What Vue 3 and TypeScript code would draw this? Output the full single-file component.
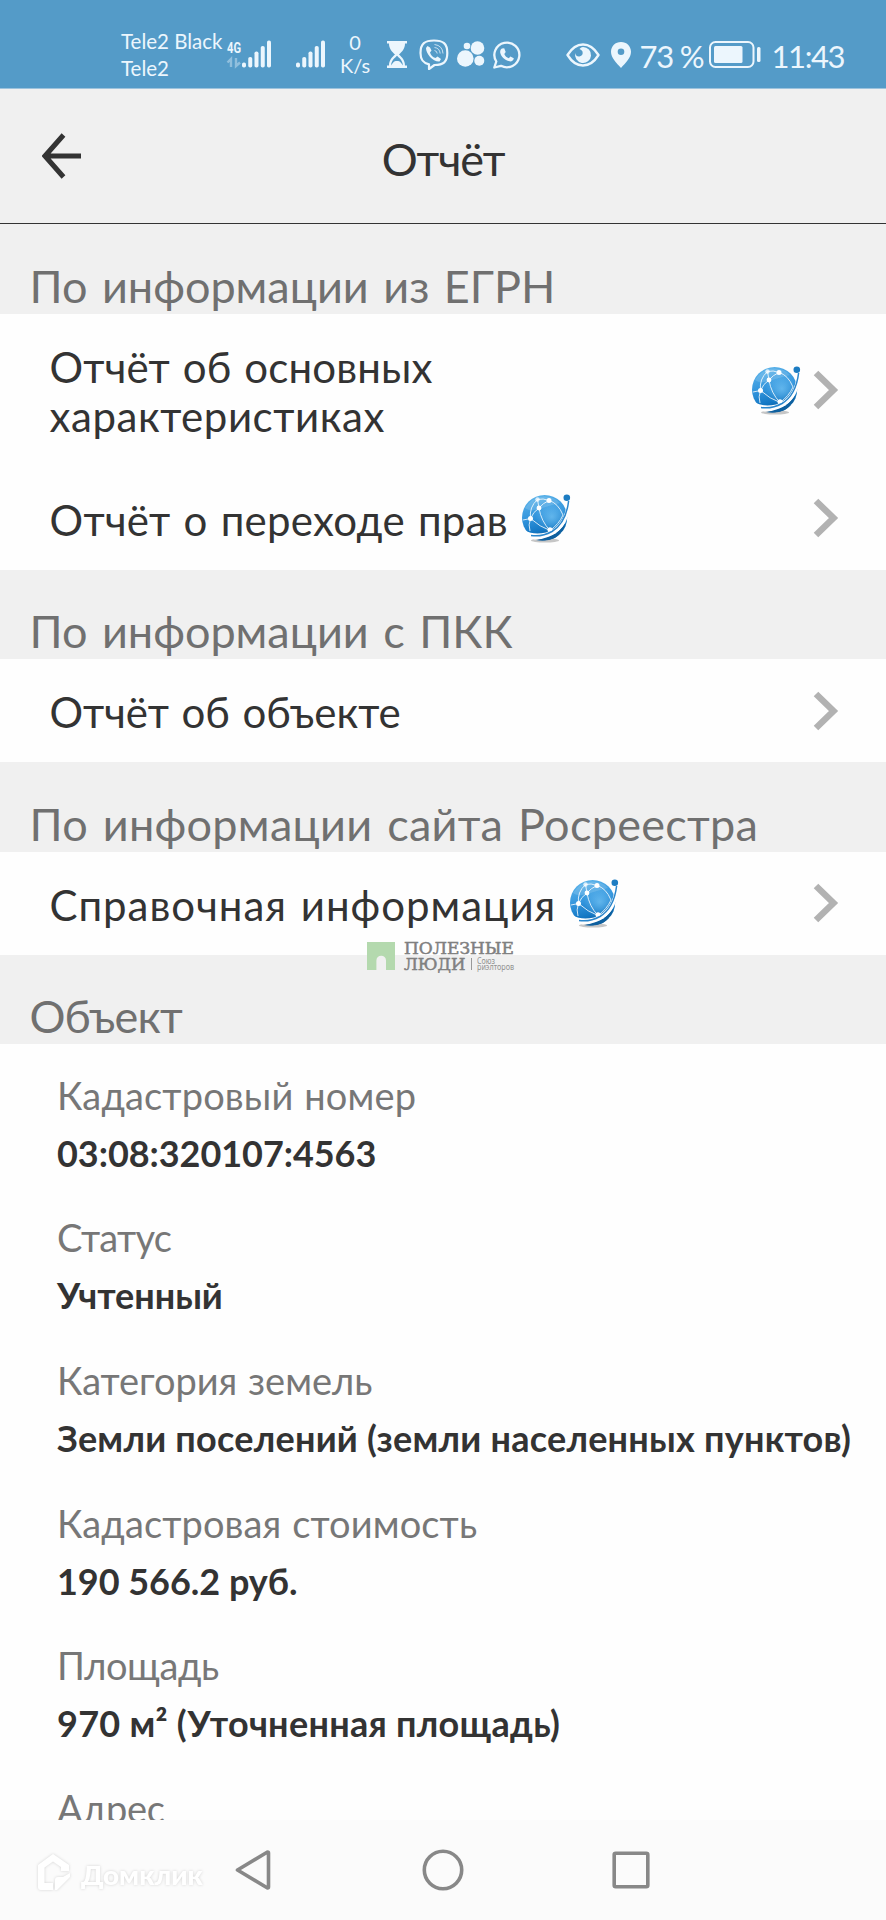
<script setup lang="ts">
interface Line {
  text: string
  tracking: number
}
interface ReportLink {
  lines: Line[]
  globe?: 'inline' | 'end'
}
interface Section {
  title: string
  tracking: number
  links: ReportLink[]
}
interface Detail {
  label: string
  labelTracking: number
  value: string
  valueTracking: number
}

const sections: Section[] = [
  {
    title: 'По информации из ЕГРН',
    tracking: 0,
    links: [
      {
        lines: [
          { text: 'Отчёт об основных', tracking: 0.15 },
          { text: 'характеристиках', tracking: 0.55 },
        ],
        globe: 'end',
      },
      { lines: [{ text: 'Отчёт о переходе прав', tracking: 0.28 }], globe: 'inline' },
    ],
  },
  {
    title: 'По информации с ПКК',
    tracking: 0,
    links: [{ lines: [{ text: 'Отчёт об объекте', tracking: -0.05 }] }],
  },
  {
    title: 'По информации сайта Росреестра',
    tracking: 0.28,
    links: [{ lines: [{ text: 'Справочная информация', tracking: 1 }], globe: 'inline' }],
  },
  { title: 'Объект', tracking: -0.8, links: [] },
]

const details: Detail[] = [
  { label: 'Кадастровый номер', labelTracking: 0.15, value: '03:08:320107:4563', valueTracking: -0.05 },
  { label: 'Статус', labelTracking: -0.7, value: 'Учтенный', valueTracking: -0.05 },
  { label: 'Категория земель', labelTracking: 0, value: 'Земли поселений (земли населенных пунктов)', valueTracking: 0.23 },
  { label: 'Кадастровая стоимость', labelTracking: 0.12, value: '190 566.2 руб.', valueTracking: -0.03 },
  { label: 'Площадь', labelTracking: -0.43, value: '970 м² (Уточненная площадь)', valueTracking: 0.27 },
  { label: 'Адрес', labelTracking: -0.3, value: '', valueTracking: 0 },
]

const bars = [5, 10.5, 16, 21.5, 27]
const track = (px: number) => ({ letterSpacing: `${px}px` })
</script>

<template>
  <div class="screen">
    <svg class="defs" width="0" height="0" aria-hidden="true">
      <defs>
        <linearGradient id="globeFill" x1="0.3" y1="0" x2="0.6" y2="1">
          <stop offset="0" stop-color="#5cb4ea" />
          <stop offset="0.45" stop-color="#3294dc" />
          <stop offset="0.75" stop-color="#1478c4" />
          <stop offset="1" stop-color="#0a5490" />
        </linearGradient>
        <radialGradient id="globeGlow" cx="0.66" cy="0.48" r="0.36">
          <stop offset="0" stop-color="#6fc0f2" stop-opacity="0.8" />
          <stop offset="1" stop-color="#6fc0f2" stop-opacity="0" />
        </radialGradient>
        <symbol id="globe" viewBox="0 0 49 49">
          <ellipse cx="23" cy="46.5" rx="14" ry="2" fill="#000" opacity="0.22" />
          <circle cx="22.6" cy="23.6" r="22.6" fill="url(#globeFill)" />
          <circle cx="22.6" cy="23.6" r="22.6" fill="url(#globeGlow)" />
          <path d="M3 14Q10 3 22 2.500Q33 2.500 38 9Q26 12 17 15Q8 18 3 14Z" fill="#fff" opacity="0.14" />
          <g fill="none" stroke="#fff" stroke-width="1" opacity="0.8">
            <path d="M8.500 24.500Q11 18 17 14Q21 9 27 6.500Q21 4 15.500 5.500L17 14" />
            <path d="M17 14Q19 27 28 36.500M27 6.500Q36 9 41 21Q37 30 28 36.500" />
            <path d="M8.500 24.500Q18 33 28 36.500Q35 42 40 38" />
            <path d="M8.500 24.500Q7 13 15.500 5.500M8.500 24.500Q6 31 8 37M1 26L8.500 24.500" />
          </g>
          <g fill="#fff">
            <circle cx="8.500" cy="24.500" r="2.500" />
            <circle cx="17" cy="14" r="2.400" />
            <circle cx="27" cy="6.500" r="2.500" />
            <circle cx="15.500" cy="5.500" r="2.200" opacity="0.75" />
            <circle cx="28" cy="35.800" r="2.500" />
          </g>
          <path d="M3 36.500Q11 41 24 38.500Q42 33 45.500 7L47.800 8Q47.500 36 26 43Q18 46 12 45.500Q6 42 3 36.500Z" fill="#fff" />
          <path d="M9 41.500Q20 43 30 37.500Q44 29 46.600 7" fill="none" stroke="#2a86cc" stroke-width="1.500" />
          <path d="M14 46Q22 45.500 28 43Q38 38 43.500 29Q41 39 33 44Q24 48 14 46Z" fill="#0e609f" />
          <circle cx="44.800" cy="3.800" r="3.300" fill="#1c7cc2" />
        </symbol>
      </defs>
    </svg>

    <header class="status">
      <div class="operators"><span>Tele2 Black</span><span>Tele2</span></div>
      <svg class="net" width="17" height="30" viewBox="0 0 17 30">
        <text x="1" y="13.500" textLength="14" lengthAdjust="spacingAndGlyphs" class="net-label">4G</text>
        <g opacity="0.4" stroke="#ecf6fd" stroke-width="2.400" fill="none">
          <path d="M5 28V20L1.500 23.500M10 19V27L14 23.500" />
        </g>
      </svg>
      <svg class="signal" width="29" height="28" viewBox="0 0 29 28">
        <rect v-for="(h, i) in bars" :key="i" :x="i * 6.250" :y="27.500 - h" width="4" :height="h" rx="1.800" />
      </svg>
      <svg class="signal second" width="29" height="28" viewBox="0 0 29 28">
        <rect v-for="(h, i) in bars" :key="i" :x="i * 6.250" :y="27.500 - h" width="4" :height="h" rx="1.800" />
      </svg>
      <div class="speed"><span>0</span><span>K/s</span></div>
      <svg class="hourglass" width="20" height="27" viewBox="0 0 20 27">
        <path d="M0 0H20V2.500H18C18 8 15 10.500 12 13.500C15 16.500 18 19 18 24.500H20V27H0V24.500H2C2 19 5 16.500 8 13.500C5 10.500 2 8 2 2.500H0Z" />
        <path d="M4 24.500C4.500 19 8 17 10 14.800C12 17 15.500 19 16 24.500C13 20 12 20 10 20C8 20 7 20 4 24.500Z" fill="#549bc8" />
      </svg>
      <svg class="viber" width="30" height="31" viewBox="0 0 30 31" fill="none" stroke="#ecf6fd">
        <path d="M15 1.500C24 1.500 28.300 4.500 28.300 14C28.300 23 24.500 26 15.500 26L10 30V25.300C4 24 1.500 21 1.500 14C1.500 4.500 6 1.500 15 1.500Z" stroke-width="2.200" stroke-linejoin="round" />
        <path d="M8.500 7L11 8.500L12.500 11.500L11 13.500C12 16.500 13.500 18 16.500 19L18.500 17.500L22 20L20.500 22.500C14 23 7 15 7 9Z" fill="#ecf6fd" stroke="none" />
        <path d="M15.500 11.500Q18 12 18.200 14.500M15.500 8.500Q20.500 9 21.200 14.500M15.500 5.500Q23.500 6.500 24 14.500" stroke-width="1" opacity="0.75" />
      </svg>
      <svg class="dots" width="28" height="27" viewBox="0 0 28 27">
        <circle cx="8.300" cy="17.500" r="8.300" /><circle cx="20.500" cy="7" r="6.800" />
        <circle cx="10" cy="5" r="3.300" /><circle cx="22.300" cy="19.800" r="5" />
      </svg>
      <svg class="whatsapp" width="28" height="28" viewBox="0 0 28 28">
        <path d="M1.300 26.500L3.300 20.500A12.500 12.300 0 1 1 8 24.800Z" fill="none" stroke="#ecf6fd" stroke-width="2.300" stroke-linejoin="round" />
        <path d="M9 7.500L11.200 7.300L12.700 11L11.300 12.900C12.200 15 13.700 16.400 15.800 17.200L17.400 15.400L20.800 17.200C20.700 19.600 18.500 20.700 16.500 20.300C11.500 19 8 15.500 7.200 11.500C7 9.500 7.800 8.200 9 7.500Z" />
      </svg>
      <svg class="eye" width="34" height="24" viewBox="0 0 34 24">
        <path d="M1.500 12Q8 1.500 17 1.500T32.500 12Q26 22.500 17 22.500T1.500 12Z" fill="none" stroke="#ecf6fd" stroke-width="2.400" stroke-linejoin="round" />
        <path d="M17 4A8 8 0 1 1 9.300 10Q10 14 13.500 13.500Q17.500 12.500 16.500 8.500Q15.500 6.500 13.500 6Q15 4 17 4Z" />
      </svg>
      <svg class="pin" width="20" height="26" viewBox="0 0 20 26">
        <path fill-rule="evenodd" d="M10 0C4.300 0 0 4.200 0 9.800C0 16 5.500 21 10 26C14.500 21 20 16 20 9.800C20 4.200 15.700 0 10 0ZM10 6.500A3.300 3.300 0 1 1 10 13.100A3.300 3.300 0 0 1 10 6.500Z" />
      </svg>
      <span class="percent">73 %</span>
      <svg class="battery" width="52" height="27" viewBox="0 0 52 27">
        <rect x="1" y="1" width="43.500" height="25" rx="5.500" fill="none" stroke="#ecf6fd" stroke-width="2" />
        <rect x="5" y="5" width="28.500" height="17" rx="1.500" />
        <rect x="48" y="6" width="3.500" height="15" rx="1.500" />
      </svg>
      <span class="clock">11:43</span>
    </header>

    <div class="toolbar">
      <svg class="back" width="40" height="46" viewBox="0 0 40 46">
        <path d="M21.500 2L3 23L21.500 44M3.500 23H39" fill="none" stroke="#333" stroke-width="5" />
      </svg>
      <h1>Отчёт</h1>
    </div>

    <main class="content">
      <section v-for="s in sections" :key="s.title">
        <h2 :style="track(s.tracking)">{{ s.title }}</h2>
        <div v-for="l in s.links" :key="l.lines[0].text" class="link" :class="{ tall: l.lines.length > 1 }">
          <span class="link-text">
            <span v-for="t in l.lines" :key="t.text" class="line" :style="track(t.tracking)">{{ t.text }}</span>
          </span>
          <svg v-if="l.globe" class="globe" :class="l.globe"><use href="#globe" /></svg>
          <svg class="chevron" width="26" height="40" viewBox="0 0 26 40">
            <path d="M3 3L20.500 20L3 37" fill="none" stroke="#b2b2b2" stroke-width="6.500" />
          </svg>
        </div>
      </section>

      <dl class="details">
        <div v-for="d in details" :key="d.label" class="detail">
          <dt :style="track(d.labelTracking)">{{ d.label }}</dt>
          <dd :style="track(d.valueTracking)">{{ d.value }}</dd>
        </div>
      </dl>
    </main>

    <nav class="navbar">
      <svg class="domclick" width="180" height="48" viewBox="0 0 180 48">
        <path d="M17 3L33 14V20H25V16L17 10.500L8.500 16.500V32H17V39H5Q2 39 2 36V14Z M34 22V26L21 39H19V29Q19 26 22 26H27Z" />
        <text x="45" y="34" textLength="122" lengthAdjust="spacingAndGlyphs">Домклик</text>
      </svg>
      <svg class="triangle" width="36" height="42" viewBox="0 0 36 42">
        <path d="M2.500 21L32.500 3Q33.500 3 33.500 4V38Q33.500 39 32.500 39Z" />
      </svg>
      <svg class="circle" width="42" height="42" viewBox="0 0 42 42"><circle cx="21" cy="21" r="18.700" /></svg>
      <svg class="square" width="38" height="38" viewBox="0 0 38 38"><rect x="2.200" y="2.200" width="33.600" height="33.600" rx="1.500" /></svg>
    </nav>

    <svg class="agency" width="150" height="34" viewBox="0 0 150 34">
      <path d="M0 0H28V28H19V18.500A4.800 4.800 0 0 0 9.400 18.500V28H0Z" fill="#b4d9ae" />
      <text class="slab" x="37" y="12" textLength="110" lengthAdjust="spacingAndGlyphs">ПОЛЕЗНЫЕ</text>
      <text class="slab" x="37" y="28" textLength="61.500" lengthAdjust="spacingAndGlyphs">ЛЮДИ</text>
      <rect x="104" y="16" width="1" height="12" fill="#999" />
      <text class="tiny" x="110" y="21.500" textLength="18" lengthAdjust="spacingAndGlyphs">Союз</text>
      <text class="tiny" x="110" y="28.300" textLength="37" lengthAdjust="spacingAndGlyphs">риэлторов</text>
    </svg>
  </div>
</template>

<style>
body { margin: 0; }
</style>

<style scoped>
.screen {
  position: relative;
  display: flex;
  flex-direction: column;
  width: 886px;
  height: 1920px;
  overflow: hidden;
  background: #fefefe;
  color: #333;
  font-family: Lato, "Noto Sans", sans-serif;
}
.defs { position: absolute; }
svg { display: block; flex: none; }

.status {
  display: flex;
  flex: none;
  box-sizing: border-box;
  height: 89px;
  padding-left: 121px;
  background: #549bc8;
  border-bottom: 1px solid #9dc3dd;
  color: #ecf6fd;
  fill: #ecf6fd;
  white-space: nowrap;
}
.operators {
  display: flex;
  flex-direction: column;
  width: 105px;
  padding-top: 28px;
  font-size: 20.500px;
  line-height: 27px;
}
.net { margin-top: 39px; overflow: visible; }
.net-label { font: 700 15px Roboto, sans-serif; }
.signal { margin-top: 40px; margin-left: -1px; }
.signal.second { margin-left: 25px; }
.speed {
  display: flex;
  flex-direction: column;
  align-items: center;
  width: 30px;
  margin-left: 15px;
  padding-top: 31px;
  font-size: 20px;
  line-height: 23px;
}
.hourglass { margin: 41px 0 0 17px; }
.viber { margin: 38.500px 0 0 12px; }
.dots { margin: 41px 0 0 8px; }
.whatsapp { margin: 40.500px 0 0 8px; }
.eye { margin: 43px 0 0 45px; }
.pin { margin: 42px 0 0 10.500px; }
.percent, .clock { padding-top: 38.500px; font-size: 31px; line-height: 34px; }
.percent { width: 69px; margin-left: 9px; letter-spacing: -1.200px; }
.battery { margin-top: 41px; }
.clock { margin-left: 11px; letter-spacing: -1.400px; }

.toolbar {
  display: grid;
  grid-template-columns: 120px 1fr 120px;
  flex: none;
  align-items: center;
  box-sizing: border-box;
  height: 135px;
  background: #f0f0f0;
  border-bottom: 1px solid #333;
}
.back { margin: 0 0 0 42px; }
h1 {
  margin: 5px 0 0;
  font-size: 45px;
  line-height: 54px;
  font-weight: 400;
  letter-spacing: -1.100px;
  text-align: center;
}

.content { flex: 1; min-height: 0; overflow: hidden; }
h2 {
  display: flex;
  align-items: flex-end;
  box-sizing: border-box;
  height: 89.500px;
  margin: 0;
  padding: 0 0 1px 29.500px;
  background: #f0f0f0;
  color: #707070;
  font-size: 45px;
  line-height: 54px;
  font-weight: 400;
  word-spacing: 3px;
}
.link {
  display: flex;
  align-items: center;
  box-sizing: border-box;
  height: 103px;
  padding: 0 47px 0 49.500px;
}
.link.tall { height: 153px; }
.link-text { padding-top: 4px; font-size: 42px; line-height: 49px; word-spacing: 2px; }
.line { display: block; }
.globe { width: 49px; height: 49px; margin-left: 14px; }
.globe.end { margin-left: auto; margin-right: 12px; }
.chevron { margin-left: auto; }
.globe.end + .chevron { margin-left: 0; }

.details { margin: 0; padding: 21.500px 0 0 57px; white-space: nowrap; }
.detail { height: 142.700px; }
dt { color: #777; font-size: 38px; line-height: 58px; word-spacing: 1px; }
dd { margin: 0; font-size: 36px; line-height: 58px; font-weight: 700; }

.navbar {
  display: flex;
  flex: none;
  align-items: center;
  height: 100px;
  background: #fbfbfb;
  fill: none;
  stroke: #888;
  stroke-width: 3.600;
  stroke-linejoin: round;
}
.domclick {
  margin-left: 36px;
  margin-top: 10px;
  fill: #fff;
  stroke: none;
  filter: drop-shadow(0 0 1.500px rgba(0, 0, 0, 0.16));
}
.domclick text { font: 900 27px Lato, sans-serif; }
.triangle { margin-left: 19px; }
.circle { margin-left: 151px; }
.square { margin-left: 148px; }

/* Agency mark laid over the list */
.agency { position: absolute; left: 367px; top: 942px; overflow: visible; }
.slab { font: 400 16px "DejaVu Serif", serif; fill: #808080; stroke: #808080; stroke-width: 0.500; }
.tiny { font: 400 8px "Noto Sans", sans-serif; fill: #909090; }
</style>
